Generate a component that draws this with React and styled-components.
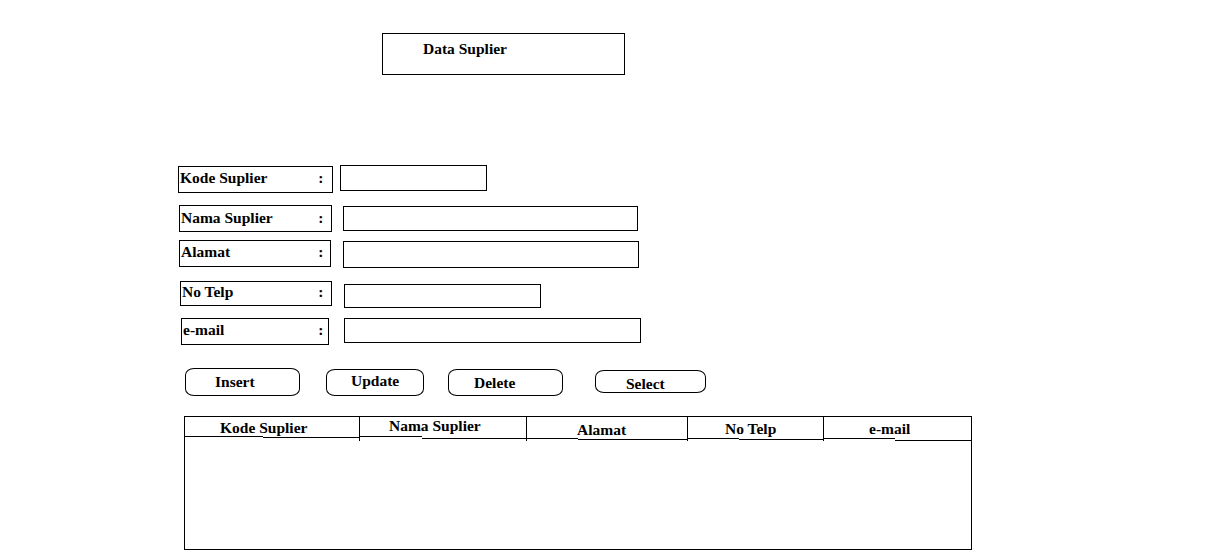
import React from 'react';
import styled, { createGlobalStyle } from 'styled-components';

const GlobalStyle = createGlobalStyle`
  body {
    margin: 0;
    background: #ffffff;
    color: #000000;
    font-family: "Liberation Serif", "Times New Roman", serif;
  }
  * {
    box-sizing: border-box;
  }
`;

const Page = styled.div`
  width: 1222px;
  height: 557px;
  padding-top: 33px;
  overflow: hidden;
`;

const TitleBox = styled.div`
  margin-left: 382px;
  width: 243px;
  height: 42px;
  border: 1px solid #000;
  padding: 6px 0 0 40px;
  font-size: 15.5px;
  font-weight: bold;
  line-height: 17px;
`;

const Form = styled.div`
  display: flex;
  flex-direction: column;
`;

const FormRow = styled.div`
  display: flex;
  align-items: flex-start;
  margin-top: ${({ $top }) => $top}px;
  margin-left: ${({ $left }) => $left}px;
`;

const Label = styled.div`
  display: flex;
  align-items: flex-start;
  width: ${({ $w }) => $w}px;
  height: ${({ $h }) => $h}px;
  margin-top: ${({ $mt }) => $mt}px;
  border: 1px solid #000;
  padding: ${({ $pt }) => $pt}px ${({ $pr }) => $pr}px 0 1px;
  font-size: 15.5px;
  font-weight: bold;
  line-height: 17px;
  white-space: nowrap;
`;

const Colon = styled.span`
  margin-left: auto;
`;

const Field = styled.input`
  display: block;
  width: ${({ $w }) => $w}px;
  height: ${({ $h }) => $h}px;
  margin: ${({ $mt }) => $mt}px 0 0 ${({ $ml }) => $ml}px;
  padding: 0 4px;
  border: 1px solid #000;
  border-radius: 0;
  background: #fff;
  font-family: inherit;
  font-size: 14px;
  outline: none;
`;

const ButtonRow = styled.div`
  display: flex;
  align-items: flex-start;
  margin-top: 23px;
  margin-left: 185px;
`;

const Button = styled.button`
  display: flex;
  align-items: flex-start;
  justify-content: flex-start;
  width: ${({ $w }) => $w}px;
  height: ${({ $h }) => $h}px;
  margin: ${({ $mt }) => $mt}px 0 0 ${({ $ml }) => $ml}px;
  padding: ${({ $pt }) => $pt}px 0 0 ${({ $pl }) => $pl}px;
  border: 1px solid #000;
  border-radius: 9px / 7px;
  background: #fff;
  color: #000;
  font-family: inherit;
  font-size: 15.5px;
  font-weight: bold;
  line-height: 17px;
  cursor: pointer;
`;

const Table = styled.div`
  margin-top: 20px;
  margin-left: 184px;
  width: 788px;
  height: 134px;
  border: 1px solid #000;
`;

const HeaderRow = styled.div`
  display: flex;
  height: 24px;
`;

const HeaderCell = styled.div`
  flex: ${({ $w }) => ($w ? `0 0 ${$w}px` : '1 1 auto')};
  height: 100%;
  padding: ${({ $pt }) => $pt}px 0 0 ${({ $pl }) => $pl}px;
  border-right: ${({ $last }) => ($last ? 'none' : '1px solid #000')};
  font-size: 15.5px;
  font-weight: bold;
  line-height: 17px;
  white-space: nowrap;
  background:
    linear-gradient(#000, #000) 0 ${({ $y1 }) => $y1}px / ${({ $split }) => $split}px 1px no-repeat,
    linear-gradient(#000, #000) ${({ $split }) => $split}px ${({ $y2 }) => $y2}px / 100% 1px no-repeat;
`;

const fields = [
  { name: 'Kode Suplier', label: [178, 166, 155, 27], input: [340, 165, 147, 26], pt: 2 },
  { name: 'Nama Suplier', label: [179, 205, 153, 27], input: [343, 206, 295, 25], pt: 3 },
  { name: 'Alamat', label: [179, 240, 152, 27], input: [343, 241, 296, 27], pt: 2 },
  { name: 'No Telp', label: [180, 281, 152, 25], input: [344, 284, 197, 24], pt: 1 },
  { name: 'e-mail', label: [181, 318, 148, 27], input: [344, 318, 297, 25], pt: 2 },
];

const buttons = [
  { text: 'Insert', x: 185, y: 368, w: 115, h: 28, pl: 29, pt: 4 },
  { text: 'Update', x: 326, y: 369, w: 98, h: 27, pl: 24, pt: 2 },
  { text: 'Delete', x: 448, y: 369, w: 115, h: 27, pl: 25, pt: 4 },
  { text: 'Select', x: 595, y: 370, w: 111, h: 23, pl: 30, pt: 4 },
];

const columns = [
  { text: 'Kode Suplier', w: 175, pl: 35, pt: 2, split: 78, y1: 19, y2: 20 },
  { text: 'Nama Suplier', w: 167, pl: 29, pt: 0, split: 62, y1: 19, y2: 21 },
  { text: 'Alamat', w: 161, pl: 50, pt: 4, split: 51, y1: 21, y2: 22 },
  { text: 'No Telp', w: 136, pl: 37, pt: 3, split: 51, y1: 21, y2: 22 },
  { text: 'e-mail', pl: 45, pt: 3, split: 71, y1: 21, y2: 23 },
];

const FORM_START = 75;

const App = () => {
  let prevBottom = FORM_START;

  return (
    <>
      <GlobalStyle />
      <Page>
        <TitleBox>Data Suplier</TitleBox>

        <Form>
          {fields.map(({ name, label, input, pt }) => {
            const [lx, ly, lw, lh] = label;
            const [ix, iy, iw, ih] = input;
            const rowTop = Math.min(ly, iy);
            const top = rowTop - prevBottom;
            prevBottom = Math.max(ly + lh, iy + ih);
            return (
              <FormRow key={name} $top={top} $left={lx}>
                <Label
                  $w={lw}
                  $h={lh}
                  $mt={ly - rowTop}
                  $pt={pt}
                  $pr={lx + lw - 1 - 323.5}
                >
                  {name}
                  <Colon>:</Colon>
                </Label>
                <Field
                  readOnly
                  aria-label={name}
                  $w={iw}
                  $h={ih}
                  $mt={iy - rowTop}
                  $ml={ix - (lx + lw)}
                />
              </FormRow>
            );
          })}
        </Form>

        <ButtonRow>
          {buttons.map((b, i) => {
            const prevEnd = i === 0 ? b.x : buttons[i - 1].x + buttons[i - 1].w;
            return (
              <Button
                key={b.text}
                $w={b.w}
                $h={b.h}
                $mt={b.y - 368}
                $ml={b.x - prevEnd}
                $pl={b.pl}
                $pt={b.pt}
              >
                {b.text}
              </Button>
            );
          })}
        </ButtonRow>

        <Table>
          <HeaderRow>
            {columns.map((c, i) => (
              <HeaderCell
                key={c.text}
                $w={c.w}
                $pl={c.pl}
                $pt={c.pt}
                $split={c.split}
                $y1={c.y1}
                $y2={c.y2}
                $last={i === columns.length - 1}
              >
                {c.text}
              </HeaderCell>
            ))}
          </HeaderRow>
        </Table>
      </Page>
    </>
  );
};

export default App;
